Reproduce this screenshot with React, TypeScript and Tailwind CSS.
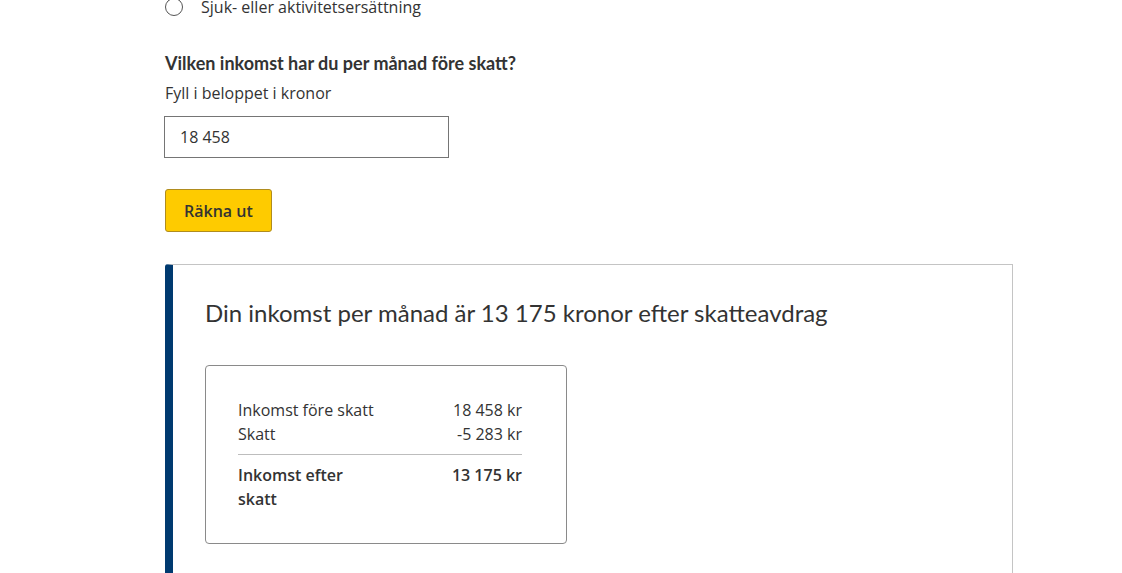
import React from "react";

const rows = [
  { label: "Inkomst före skatt", value: "18 458 kr" },
  { label: "Skatt", value: "-5 283 kr" },
];

export default function App() {
  return (
    <div className="min-h-screen overflow-hidden bg-white font-['Open_Sans',sans-serif] text-[#333333]">
      <div className="ml-[165px] w-[848px]">
        <label className="-mt-[5px] flex items-center gap-[18px] text-base leading-6">
          <span className="h-[18px] w-[18px] rounded-full border border-[#555]" />
          <span>Sjuk- eller aktivitetsersättning</span>
        </label>

        <h3 className="mt-[32px] font-['Lato',sans-serif] text-[18px] font-bold leading-6">
          Vilken inkomst har du per månad före skatt?
        </h3>
        <p className="mt-[6px] text-base leading-6">Fyll i beloppet i kronor</p>

        <input
          readOnly
          value="18 458"
          className="-ml-px mt-[11px] block h-[42px] w-[285px] border border-[#757575] px-[15px] text-base text-[#333] outline-none"
        />

        <button className="mt-[31px] h-[43px] rounded-[3px] border border-[#b08c1e] bg-[#fecb00] px-[18px] text-base font-semibold text-[#333]">
          Räkna ut
        </button>

        <section className="mt-[32px] rounded-tl-[3px] border border-l-[8px] border-[#c4c4c4] border-l-[#003a70] pb-10 pl-[32px] pt-[32px]">
          <h2 className="font-['Lato',sans-serif] text-[24px] leading-8 text-[#333]">
            Din inkomst per månad är 13 175 kronor efter skatteavdrag
          </h2>

          <div className="mt-[36px] w-[362px] rounded-[4px] border border-[#8a8a8a] pb-[32px] pl-[32px] pr-[44px] pt-[32px]">
            {rows.map((r) => (
              <div key={r.label} className="grid grid-cols-2 text-base leading-6">
                <span>{r.label}</span>
                <span className="text-right">{r.value}</span>
              </div>
            ))}
            <div className="my-[8px] border-t border-[#bdbdbd]" />
            <div className="grid grid-cols-2 text-base font-semibold leading-6">
              <span>Inkomst efter skatt</span>
              <span className="text-right">13 175 kr</span>
            </div>
          </div>
        </section>
      </div>
    </div>
  );
}
